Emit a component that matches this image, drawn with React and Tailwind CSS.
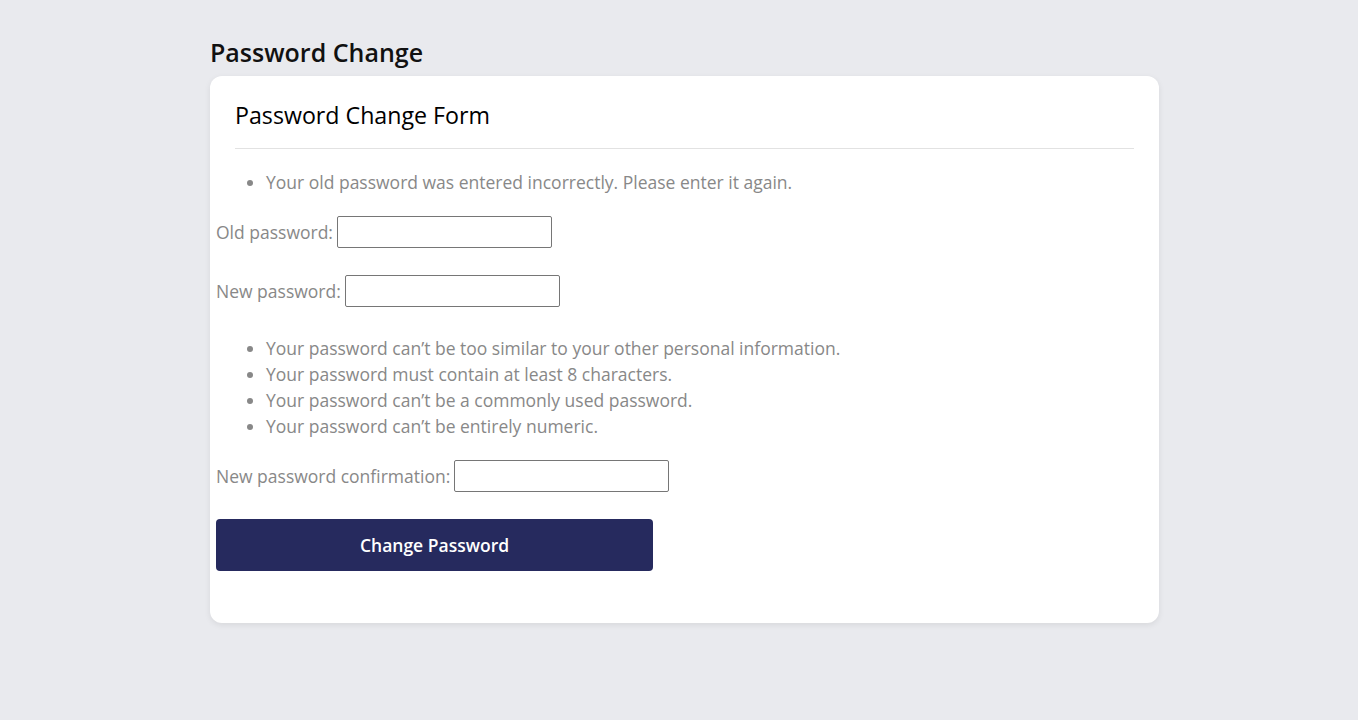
import React from "react";

const hints = [
  "Your password can’t be too similar to your other personal information.",
  "Your password must contain at least 8 characters.",
  "Your password can’t be a commonly used password.",
  "Your password can’t be entirely numeric.",
];

const Field = ({ label, className = "" }) => (
  <div className={`flex items-center h-[32px] ${className}`}>
    <label className="mr-[4px]">{label}</label>
    <input
      type="password"
      className="w-[215px] h-[32px] border border-[#767676] rounded-[2px] bg-white outline-none px-1"
    />
  </div>
);

export default function App() {
  return (
    <div
      className="min-h-screen bg-[#e9eaee] pt-[36px]"
      style={{ fontFamily: '"Open Sans", "Noto Sans", sans-serif' }}
    >
      <div className="w-[949px] ml-[210px]">
        <h1 className="text-[25px] leading-[32px] font-semibold text-[#111] mb-[8px]">
          Password Change
        </h1>

        <div className="bg-white rounded-xl shadow-[0_2px_6px_rgba(0,0,0,0.08)] pb-[52px]">
          {/* Header */}
          <div className="mx-[25px] pt-[24px] pb-[18px] border-b border-[#e2e2e2]">
            <h2 className="text-[23.2px] leading-[30px] text-black">Password Change Form</h2>
          </div>

          {/* Form */}
          <form className="text-[17.5px] leading-[26px] text-[#888]" onSubmit={(e) => e.preventDefault()}>
            <ul className="list-disc pl-[56px] mt-[20px] marker:text-[#888]">
              <li>Your old password was entered incorrectly. Please enter it again.</li>
            </ul>

            <div className="px-[6px]">
              <Field label="Old password:" className="mt-[21px]" />
              <Field label="New password:" className="mt-[27px]" />
            </div>

            <ul className="list-disc pl-[56px] mt-[28px]">
              {hints.map((h) => (
                <li key={h}>{h}</li>
              ))}
            </ul>

            <div className="px-[6px]">
              <Field label="New password confirmation:" className="mt-[21px]" />
              <button
                type="submit"
                className="mt-[27px] w-[437px] h-[52px] rounded-[4px] bg-[#262a5e] text-white text-[17.5px] font-semibold"
              >
                Change Password
              </button>
            </div>
          </form>
        </div>
      </div>
    </div>
  );
}
